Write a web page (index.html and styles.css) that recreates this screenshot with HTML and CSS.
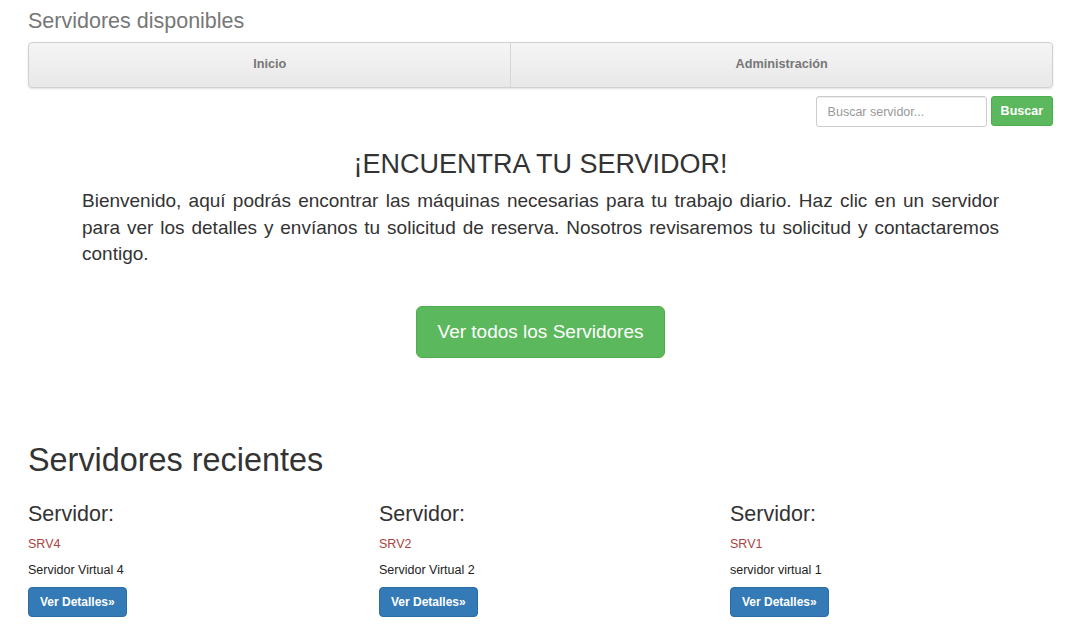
FILE: index.html
```html
<!DOCTYPE html>
<html lang="es">
<head>
<meta charset="utf-8">
<title>Servidores disponibles</title>
<link rel="stylesheet" href="styles.css">
</head>
<body>
<div class="page">
  <div class="brand">Servidores disponibles</div>
  <nav class="nav">
    <a class="nav-item">Inicio</a>
    <a class="nav-item">Administración</a>
  </nav>
  <form class="search">
    <input class="search-input" type="text" placeholder="Buscar servidor...">
    <button class="btn btn-success btn-sm" type="button">Buscar</button>
  </form>
  <section class="hero">
    <h2 class="hero-title">¡ENCUENTRA TU SERVIDOR!</h2>
    <p class="hero-text">Bienvenido, aquí podrás encontrar las máquinas necesarias para tu trabajo diario. Haz clic en un servidor para ver los detalles y envíanos tu solicitud de reserva. Nosotros revisaremos tu solicitud y contactaremos contigo.</p>
    <div class="hero-action"><a class="btn btn-success btn-lg">Ver todos los Servidores</a></div>
  </section>
  <h1 class="recent-title">Servidores recientes</h1>
  <div class="cards">
    <div class="card">
      <h3 class="card-title">Servidor:</h3>
      <p class="card-code">SRV4</p>
      <p class="card-desc">Servidor Virtual 4</p>
      <a class="btn btn-primary">Ver Detalles»</a>
    </div>
    <div class="card">
      <h3 class="card-title">Servidor:</h3>
      <p class="card-code">SRV2</p>
      <p class="card-desc">Servidor Virtual 2</p>
      <a class="btn btn-primary">Ver Detalles»</a>
    </div>
    <div class="card">
      <h3 class="card-title">Servidor:</h3>
      <p class="card-code">SRV1</p>
      <p class="card-desc">servidor virtual 1</p>
      <a class="btn btn-primary">Ver Detalles»</a>
    </div>
  </div>
</div>
</body>
</html>
```
FILE: styles.css
```css
* { box-sizing: border-box; }
html, body { margin: 0; padding: 0; background: #fff; }
body {
  font-family: "Liberation Sans", Arial, Helvetica, sans-serif;
  font-size: 14px;
  line-height: 1.42857;
  color: #333;
}
.page { padding: 0 13px 0 28px; }
.brand {
  font-size: 21.5px;
  line-height: 22px;
  color: #777;
  padding-top: 10px;
  height: 42px;
}
.nav {
  display: flex;
  height: 46px;
  border: 1px solid #d0d0d0;
  border-radius: 4px;
  background: linear-gradient(to bottom, #f5f5f5 0%, #e8e8e8 100%);
  box-shadow: 0 1px 2px rgba(0,0,0,0.12);
}
.nav-item {
  flex: 1 1 auto;
  display: flex;
  align-items: center;
  justify-content: center;
  padding: 0 15px 1px;
  font-weight: bold;
  font-size: 12.7px;
  color: #777;
  text-decoration: none;
}
.nav-item + .nav-item { border-left: 1px solid #d5d5d5; }
.search {
  display: flex;
  justify-content: flex-end;
  gap: 4px;
  margin-top: 8px;
}
.search-input {
  width: 171px;
  height: 31px;
  padding: 5px 11px;
  font-family: inherit;
  font-size: 12.5px;
  color: #555;
  border: 1px solid #ccc;
  border-radius: 3px;
  box-shadow: inset 0 1px 1px rgba(0,0,0,0.075);
}
.search-input::placeholder { color: #999; }
.btn {
  display: inline-block;
  font-family: inherit;
  font-weight: normal;
  text-align: center;
  border: 1px solid transparent;
  border-radius: 4px;
  text-decoration: none;
  cursor: pointer;
}
.btn-success { background: #5cb85c; border-color: #4cae4c; color: #fff; }
.btn-primary { background: #337ab7; border-color: #2e6da4; color: #fff; }
.btn-sm {
  height: 30px;
  padding: 0 9px;
  font-size: 12.5px;
  font-weight: bold;
  border-radius: 3px;
}
.hero { margin: 0 54px; }
.hero-title {
  margin: 19px 0 6px;
  text-align: center;
  font-size: 27px;
  font-weight: normal;
  line-height: 36px;
  color: #333;
}
.hero-text {
  margin: 0;
  font-size: 19px;
  line-height: 26.5px;
  text-align: justify;
  color: #333;
}
.hero-action {
  display: flex;
  justify-content: center;
  margin-top: 38px;
}
.btn-lg {
  height: 52px;
  line-height: 50px;
  padding: 0 21px;
  font-size: 19px;
  border-radius: 6px;
}
.recent-title {
  margin: 80px 0 0;
  font-size: 32.4px;
  font-weight: normal;
  line-height: 44px;
  color: #333;
}
.cards {
  display: grid;
  grid-template-columns: repeat(3, 351px);
  margin-top: 18px;
}
.card-title {
  margin: 0;
  font-size: 21.5px;
  font-weight: normal;
  line-height: 28px;
  color: #333;
}
.card-code {
  margin: 6px 0 0;
  color: #a94442;
  font-size: 12.5px;
  line-height: 20px;
}
.card-desc {
  margin: 6px 0 0;
  color: #222;
  font-size: 12.5px;
  line-height: 20px;
}
.card .btn-primary {
  margin-top: 7px;
  height: 30px;
  line-height: 28px;
  padding: 0 11px;
  font-size: 12px;
  font-weight: bold;
}
```
